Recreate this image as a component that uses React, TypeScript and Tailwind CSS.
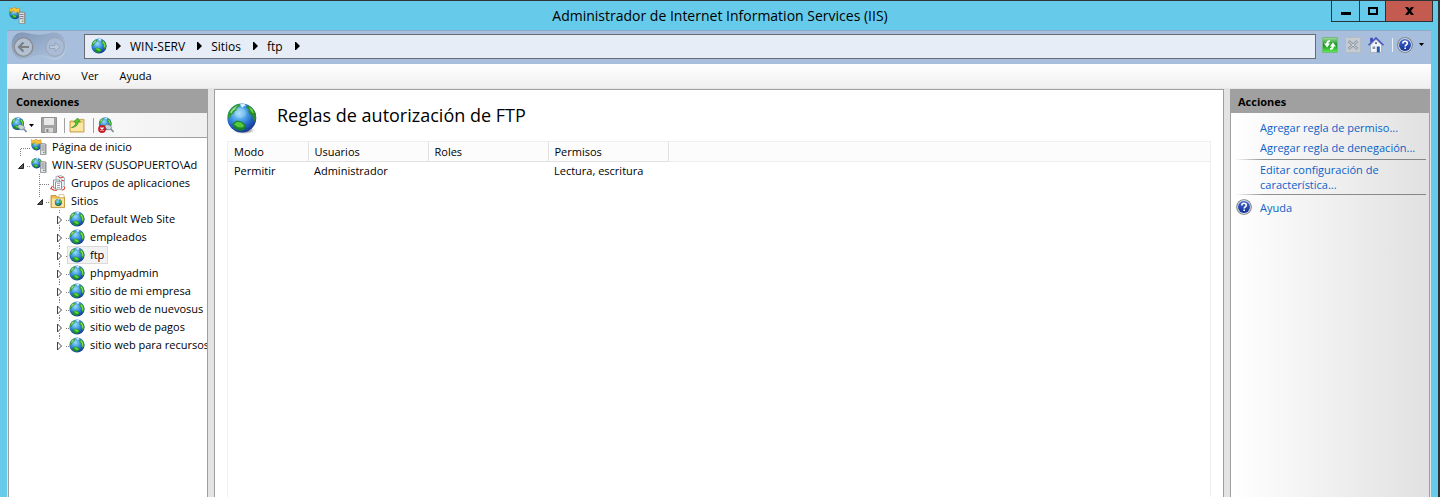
import React from "react";

const GlobeShape = () => (
  <g>
    <circle cx="8" cy="8" r="7.6" fill="url(#sea)" />
    <path d="M.7 6 1.800 3.700 4 1.900 5.600 1.600 6.200 3 4.800 4.700 3.600 5.200 2.800 7.400 1.500 8.600z" fill="#3c9f35" />
    <path d="M2.300 4.300 4.300 2.500l1 .7-1.700 1.600-.9 1.400z" fill="#9cdc86" />
    <path d="M7 1.200 9.500.8l1 1.200-1.600 1z" fill="#d6eefb" />
    <path d="M10.400 3.100 12.300 2.400l1.800 1.900 1.100 2.600-.1 2.700-1.400 1.700-1.200-1.700.2-2.300-2-1.700z" fill="#32a32a" />
    <path d="M11.500 3.900 12.600 3.600l1.500 2.800v2.800l-.8-.2-.1-2.500z" fill="#93ee4e" />
    <path d="M3.700 10.600 6.300 9.500l3.300 1.300 1.100 1.700-2 1.900-3 .1L3.500 13z" fill="#1d8f24" />
    <path d="M4.600 10.800 6.500 10l2.700 1.300.6 1.200-2.200.5z" fill="#5fd63c" />
  </g>
);

const LargeGlobe = () => (
  <svg className="h-8 w-[30px] shrink-0" viewBox="0 0 30 32" aria-hidden="true">
    <ellipse cx="17" cy="27.500" rx="11" ry="3.500" fill="url(#shade)" />
    <circle cx="14.800" cy="15" r="14.500" fill="url(#sea)" />
    <path d="M.8 11.500C2.200 6.500 6 2.500 11 1l2.500.6-1.200 2.200-3 1.500 1 1.800-2.600 1.300-1 2-2.400 1-.8 3-2 1.200z" fill="#2f9a3a" />
    <path d="M3 9.500C4.500 6 7.500 3.500 11 2.400L8.600 4.800l-.4 1.800-2.400 1.200L5 10z" fill="#9add9a" />
    <path d="M13 1.200 17 .9l2 1.300-2.600 1.300-1.200 1.300z" fill="#e2f4fc" />
    <path d="M20.500 2c4 1.500 7.300 5 8.500 9.500l-.2 5-1.700 2-1.400-3-.4-3.400-2.500-.6-1.500-2.500.6-2.600-2.700-2z" fill="#2b8a2c" />
    <path d="M22 3.800 25.500 6.500l1.200 3.500-1.500-.3L23.300 7z" fill="#71d24b" />
    <path d="M5 21.200 9.500 17.600l5.300 1 4.200 3.600-1.600 4.200-4.200 1.600-5.400-2.500z" fill="#1a8329" />
    <path d="M6.800 21.300 10 18.800l4.300.8 2.900 2.800-1.500 2.100-4.900-.2z" fill="#54c93d" />
    <ellipse cx="13.500" cy="10" rx="6" ry="5" fill="#fff" opacity=".18" />
  </svg>
);

const Svg = ({ className = "size-4", children, box = "0 0 16 16" }: { className?: string; children: React.ReactNode; box?: string }) => (
  <svg className={`${className} shrink-0`} viewBox={box} aria-hidden="true">
    {children}
  </svg>
);

const Globe = () => (
  <Svg>
    <GlobeShape />
  </Svg>
);

const Tower = () => (
  <g>
    <path d="M9.500 4.500h4.700l1.300 1V15.500h-6z" fill="#8a8d92" />
    <path d="M9.500 5h5v10.500h-5z" fill="#e3e5e7" stroke="#85888d" strokeWidth=".7" />
    <path d="M10.300 7h3.400M10.300 9h3.400M10.300 11h3.400" stroke="#74787d" strokeWidth=".9" />
    <path d="M12 13.300h1.500" stroke="#3fae3a" strokeWidth="1.200" />
  </g>
);

const ServerIcon = ({ home = false, className = "size-4" }: { home?: boolean; className?: string }) => (
  <Svg className={className}>
    <g transform="translate(0 .5) scale(.7)">
      <GlobeShape />
    </g>
    {home && <path d="M0 .5 2.500 2 5 0l1.500 1.600L10 .8v5L7.600 4.400 6 6 4.600 3.600 1 4.500z" fill="#f9c63a" stroke="#c98712" strokeWidth=".5" />}
    <Tower />
  </Svg>
);

const PoolsIcon = () => (
  <Svg>
    <path d="M6 1.500 11 .6l3.500 2.200-.2 8-3.300 2.400-5-.8z" fill="#eef3f6" stroke="#8ba7b5" strokeWidth=".8" />
    <path d="M8 1.200 10 3l3.600-1M11 5l3.200 1" stroke="#d23c2c" fill="none" />
    <path d="M3.500 5h6v8h-6z" fill="#fff" stroke="#6d7c88" strokeWidth=".8" />
    <path d="M5.500 6.800h6v7.400h-6z" fill="#fff" stroke="#6d7c88" strokeWidth=".8" />
    <path d="M7 8.700h3M7 10.500h3M7 12.300h3" stroke="#7e90a0" strokeWidth=".8" />
    <path d="M2.500 11 .8 13.600 4 15.200h3M14.800 11.500l-.6 2.700-2.500 1" stroke="#d33f2d" strokeWidth="1.100" fill="none" />
  </Svg>
);

const SitesIcon = () => (
  <Svg>
    <path d="M1 2.500h5l1 1.600h7.500v10.500H1z" fill="#e9bd55" stroke="#b98b2b" strokeWidth=".8" />
    <path d="M2 5.500h12v8.400H2z" fill="#fae39b" />
    <path d="M9 1.600h5v3H9z" fill="#fff" stroke="#c5a85a" strokeWidth=".6" />
    <g transform="translate(4.600 5.800) scale(.46)">
      <GlobeShape />
    </g>
  </Svg>
);

const Plug = () => (
  <g>
    <path d="m10 10 3 2.200 2.600 2.800" stroke="#7c9098" strokeWidth="1.700" fill="none" />
    <path d="m6.500 9.400 2-2 3.600.8 1.600 2.400-1.800 2.200-3-.2z" fill="#c3d3d8" stroke="#6e8790" strokeWidth=".8" />
  </g>
);

const ConnectIcon = () => (
  <Svg>
    <g transform="scale(.84)">
      <GlobeShape />
    </g>
    <Plug />
  </Svg>
);

const DisconnectIcon = () => (
  <Svg>
    <g transform="translate(.5 0) scale(.84)">
      <GlobeShape />
    </g>
    <Plug />
    <circle cx="4" cy="12" r="3.900" fill="#c5202a" />
    <path d="m2.500 10.500 3 3m0-3-3 3" stroke="#fff" strokeWidth="1.300" />
  </Svg>
);

const SaveIcon = () => (
  <Svg>
    <path d="M.5.5h15v15h-15z" fill="#a3a3a3" stroke="#919191" />
    <path d="M3 1h10v7H3z" fill="#e8e8e8" />
    <path d="M4 11h8v4.500H4z" fill="#d8d8d8" />
    <path d="M5.300 12h2.200v3H5.300z" fill="#8a8a8a" />
  </Svg>
);

const UpFolderIcon = () => (
  <Svg>
    <path d="M1 4h7l1.400-1.600H15V15H1z" fill="#f2d27a" stroke="#bd9644" strokeWidth=".8" />
    <path d="M2 6h12v8H2z" fill="#fae5a2" />
    <path d="M2.500 10.500C5.500 9.500 7 7.500 6.700 5H4.800L8.500 1 11.500 5H9.300C9 8 6.500 10.500 2.500 10.500z" fill="#54c52d" stroke="#2c8a20" strokeWidth=".6" />
  </Svg>
);

const HelpIcon = () => (
  <Svg>
    <circle cx="8" cy="8" r="7.800" fill="#73777f" />
    <circle cx="8" cy="8" r="6.900" fill="#d9dde6" />
    <circle cx="8" cy="8" r="6" fill="url(#help)" />
    <path d="M5.800 6.400C5.800 4.900 6.700 4.200 8 4.200s2.300.8 2.300 2c0 1.600-2.100 1.600-2.100 3.200M8.200 10.600v1.500" stroke="#fff" strokeWidth="1.600" fill="none" />
  </Svg>
);

const RefreshIcon = () => (
  <Svg>
    <path d="M.5.5h15v15h-15z" fill="url(#green)" stroke="#7cb783" />
    <path d="M8 3.200C5.600 3 4.200 4.400 4.200 6.600H1.900l3.200 4 3.100-4H6.400c0-1.200.4-1.600 1.600-1.800z" fill="#fff" />
    <path d="M8 12.800c2.400.2 3.800-1.200 3.800-3.400h2.300l-3.200-4-3.100 4h1.800c0 1.200-.4 1.600-1.600 1.800z" fill="#fff" />
  </Svg>
);

const StopIcon = () => (
  <Svg>
    <path d="M.5.5h15v15h-15z" fill="#c5cbd3" stroke="#b5bbc3" />
    <path d="m3.500 4 9 8m0-8-9 8" stroke="#9299a2" strokeWidth="2.800" />
    <path d="m3.500 4 9 8m0-8-9 8" stroke="#d4d8dc" strokeWidth="1" />
  </Svg>
);

const HomeIcon = () => (
  <Svg>
    <path d="M2.200.8h2.600v4H2.200z" fill="#3b43b5" />
    <path d="M2.500 8 8 2.500 13.600 8v7.400H2.500z" fill="#f3f4f7" stroke="#9ba1ad" strokeWidth=".7" />
    <path d="M.5 8.200 8 .9l7.500 7.300" stroke="#4452bd" strokeWidth="1.500" fill="none" />
    <path d="M8.800 9.500h3v5.900h-3z" fill="#235ca8" />
    <path d="M4.600 9.500h2.600V12H4.600z" fill="#8693ad" />
    <path d="M7 5.300h2v1.800H7z" fill="#5e6c8d" />
  </Svg>
);

const Crumb = () => (
  <Svg className="h-2 w-[5px]" box="0 0 5 8">
    <path d="M0 0h1l4 4-4 4H0z" fill="#000" />
  </Svg>
);

const Caret = () => (
  <Svg className="h-[3px] w-[5px]" box="0 0 5 3">
    <path d="M0 0h5L2.500 3z" fill="#000" />
  </Svg>
);

const NavPad = () => (
  <svg className="block h-7 w-14" viewBox="0 0 56 28" aria-hidden="true">
    <path d="M11 1c6 0 9 2.200 17 2.200S39 1 43 1c8 0 12 6 12 12.500S51 27 44 27c-6 0-9-3.500-16-3.500S18 27 12 27C5 27 1 20.500 1 13.500S4 1 11 1z" fill="url(#pad)" stroke="url(#padEdge)" />
    <circle cx="12.500" cy="15" r="9.300" fill="#b3c0d1" stroke="#8a8c90" strokeWidth="1.300" />
    <path d="M18 15H8m4.500-4.500L8 15l4.500 4.500" stroke="#7d7f83" strokeWidth="2.200" fill="none" />
    <circle cx="44" cy="15" r="9.300" fill="#a9bcd6" stroke="#9aa4b1" />
    <path d="M38.500 13.500H44v-3l5 4.500-5 4.500v-3h-5.500z" stroke="#99a5b4" fill="#b9c9dd" />
  </svg>
);

const Defs = () => (
  <svg className="absolute size-0" aria-hidden="true">
    <defs>
      <radialGradient id="sea" cx=".4" cy=".34" r=".68">
        <stop offset="0" stopColor="#9adcf8" />
        <stop offset=".4" stopColor="#479fe6" />
        <stop offset=".75" stopColor="#1f5cc0" />
        <stop offset="1" stopColor="#153a8c" />
      </radialGradient>
      <radialGradient id="shade">
        <stop offset="0" stopColor="#555" />
        <stop offset="1" stopColor="#555" stopOpacity="0" />
      </radialGradient>
      <linearGradient id="help" x2="0" y2="1">
        <stop offset="0" stopColor="#4468cc" />
        <stop offset="1" stopColor="#12309a" />
      </linearGradient>
      <linearGradient id="green" x2="0" y2="1">
        <stop offset="0" stopColor="#9fdc9c" />
        <stop offset=".5" stopColor="#12951c" />
        <stop offset="1" stopColor="#5cf052" />
      </linearGradient>
      <linearGradient id="pad" x2="1" y2="1">
        <stop offset="0" stopColor="#7f97b8" />
        <stop offset="1" stopColor="#b0c5e0" />
      </linearGradient>
      <linearGradient id="padEdge" x2="1" y2="1">
        <stop offset="0" stopColor="#7d8fa8" />
        <stop offset="1" stopColor="#c6d6ea" />
      </linearGradient>
    </defs>
  </svg>
);

type Kind = "first" | "server" | "child" | "folder" | "site" | "last";

const guideWidth: Record<Kind, string> = {
  first: "w-[22px]",
  server: "w-[22px]",
  child: "w-[41px]",
  folder: "w-[41px]",
  site: "w-[60px]",
  last: "w-[60px]",
};

const Guide = ({ kind }: { kind: Kind }) => (
  <svg className={`h-[18px] shrink-0 ${guideWidth[kind]}`} aria-hidden="true">
    <g stroke="#808080" strokeDasharray="1 1" fill="none">
      {kind === "first" && <path d="M11.500 18V10.500H22" />}
      {kind === "server" && <path d="M18 10.500h4" />}
      {kind === "child" && <path d="M30.500 0v18M31 10.500h10" />}
      {kind === "folder" && <path d="M30.500 0v5M37 10.500h4" />}
      {kind === "site" && <path d="M50.500 0v4M50.500 15v3M57 10.500h3" />}
      {kind === "last" && <path d="M50.500 0v4M57 10.500h3" />}
    </g>
    {kind === "server" && <path d="M14.500 7.500v5h-5z" fill="#595959" stroke="#262626" />}
    {kind === "folder" && <path d="M33.500 7.500v5h-5z" fill="#595959" stroke="#262626" />}
    {(kind === "site" || kind === "last") && <path d="M48.500 6v8l4-4z" fill="#fff" stroke="#444" />}
  </svg>
);

const nodes: { kind: Kind; label: string; icon: React.ReactNode; selected?: boolean }[] = [
  { kind: "first", label: "Página de inicio", icon: <ServerIcon home /> },
  { kind: "server", label: "WIN-SERV (SUSOPUERTO\\Ad", icon: <ServerIcon /> },
  { kind: "child", label: "Grupos de aplicaciones", icon: <PoolsIcon /> },
  { kind: "folder", label: "Sitios", icon: <SitesIcon /> },
  { kind: "site", label: "Default Web Site", icon: <Globe /> },
  { kind: "site", label: "empleados", icon: <Globe /> },
  { kind: "site", label: "ftp", icon: <Globe />, selected: true },
  { kind: "site", label: "phpmyadmin", icon: <Globe /> },
  { kind: "site", label: "sitio de mi empresa", icon: <Globe /> },
  { kind: "site", label: "sitio web de nuevosus", icon: <Globe /> },
  { kind: "site", label: "sitio web de pagos", icon: <Globe /> },
  { kind: "last", label: "sitio web para recursos", icon: <Globe /> },
];

const PanelTitle = ({ children }: { children: React.ReactNode }) => (
  <h2 className="flex h-6 shrink-0 items-center bg-[#a0a0a0] px-[7px] font-bold">{children}</h2>
);

const Rule = () => <hr className="ml-1 mr-[3px] h-px border-0 bg-linear-to-r from-transparent via-[#909090] via-15% to-[#858585]" />;

const columns = ["Modo", "Usuarios", "Roles", "Permisos"];
const rules = [["Permitir", "Administrador", "", "Lectura, escritura"]];

export default function App() {
  return (
    <div className="flex h-screen flex-col overflow-hidden border-t border-r-2 border-[#2f3338] bg-[#66cbea] pr-[7px] pl-[7px] font-['Open_Sans','Noto_Sans',sans-serif] text-[11px] leading-[15px] text-black">
      <Defs />
      <header className="flex h-[29px] shrink-0 items-start">
        <div className="flex flex-1 pt-[6px] pl-[2px]">
          <ServerIcon home className="size-[17px]" />
        </div>
        <h1 className="pt-[5px] text-[14px] leading-[20px]">Administrador de Internet Information Services (IIS)</h1>
        <div className="flex flex-1 justify-end">
          <div className="-mr-[2px] flex h-[21px] divide-x divide-[#263238] border-x border-b border-[#263238]">
            <button aria-label="Minimizar" className="flex w-[28px] items-center justify-center pt-1">
              <span className="h-[3px] w-[10px] bg-black" />
            </button>
            <button aria-label="Maximizar" className="flex w-[26px] items-center justify-center">
              <span className="h-2 w-[10px] border-2 border-black" />
            </button>
            <button aria-label="Cerrar" className="flex w-[46px] items-center justify-center bg-[#c35b50]">
              <Svg className="h-2 w-[9px]" box="0 0 9 8">
                <path d="M0 0h3l1.500 2L6 0h3L6 4l3 4H6L4.500 6 3 8H0l3-4z" fill="#000" />
              </Svg>
            </button>
          </div>
        </div>
      </header>

      <div className="flex min-h-0 flex-1 flex-col bg-[#e3e3e3]">
        <nav className="flex h-[34px] shrink-0 items-center border-t border-[#8aaac4] bg-[#a7bfdd] pr-[7px] pb-[3px] pl-[4px]">
          <button aria-label="Atrás y adelante">
            <NavPad />
          </button>
          <div className="ml-[17px] flex h-[25px] flex-1 items-center border border-[#686c72] bg-[#e6edf6] px-[6px]">
            <Globe />
            <ol className="ml-[9px] flex items-center gap-[9px] text-[12px]">
              <li><Crumb /></li>
              <li className="flex items-center gap-3"><a href="#server">WIN-SERV</a><Crumb /></li>
              <li className="flex items-center gap-3"><a href="#sitios">Sitios</a><Crumb /></li>
              <li className="flex items-center gap-3"><a href="#ftp">ftp</a><Crumb /></li>
            </ol>
          </div>
          <div className="ml-[6px] flex items-center gap-[7px] pb-[3px]">
            <button aria-label="Actualizar"><RefreshIcon /></button>
            <button aria-label="Detener" disabled><StopIcon /></button>
            <button aria-label="Inicio"><HomeIcon /></button>
            <span className="ml-px h-[14px] w-px bg-[#e9eff7]" />
            <button aria-label="Ayuda" className="-ml-[3px] flex items-center gap-[6px]"><HelpIcon /><Caret /></button>
          </div>
        </nav>

        <div className="flex h-6 shrink-0 items-center gap-[21px] bg-linear-to-b from-white to-[#efefef] px-[15px] pb-[2px]">
          <button>Archivo</button>
          <button>Ver</button>
          <button>Ayuda</button>
        </div>

        <div className="flex min-h-0 flex-1 gap-[6px] border-t border-[#e6e6e6] px-px">
          <aside className="flex w-[200px] shrink-0 flex-col border-x border-[#a0a0a0] bg-white">
            <PanelTitle>Conexiones</PanelTitle>
            <div className="flex h-[25px] shrink-0 items-center border-b border-[#a0a0a0] bg-linear-to-r from-white to-[#f0f0f0] pl-[2px]">
              <button aria-label="Conectar" className="flex items-center gap-[2px]"><ConnectIcon /><Caret /></button>
              <button aria-label="Guardar" className="ml-[7px]" disabled><SaveIcon /></button>
              <span className="ml-[7px] h-[15px] w-px bg-[#a0a0a0]" />
              <button aria-label="Subir" className="ml-[4px]"><UpFolderIcon /></button>
              <span className="ml-[8px] h-[15px] w-px bg-[#a0a0a0]" />
              <button aria-label="Desconectar" className="ml-[4px]"><DisconnectIcon /></button>
            </div>
            <ul className="overflow-hidden">
              {nodes.map((n) => (
                <li key={n.label} className="flex h-[18px] items-center whitespace-nowrap">
                  <Guide kind={n.kind} />
                  <div className={n.selected ? "-ml-[2px] flex h-[18px] items-center gap-[5px] border border-[#dadada] bg-[#f2f2f2] pr-[3px] pl-px" : "flex h-[18px] items-center gap-[5px]"}>
                    {n.icon}
                    <span className="pb-[2px]">{n.label}</span>
                  </div>
                </li>
              ))}
            </ul>
          </aside>

          <main className="flex min-w-0 flex-1 flex-col border-x border-t border-[#a0a0a0] bg-white pr-3 pl-3">
            <div className="flex h-[51px] shrink-0 items-center gap-5">
              <span className="pt-[6px]"><LargeGlobe /></span>
              <h2 className="pb-[2px] text-[18px] leading-[24px]">Reglas de autorización de FTP</h2>
            </div>
            <div className="min-h-0 flex-1 border-x border-t border-[#efefef]">
              <table className="w-full table-fixed border-collapse text-left">
                <colgroup>
                  <col className="w-[80px]" />
                  <col className="w-[120px]" />
                  <col className="w-[120px]" />
                  <col className="w-[120px]" />
                  <col />
                </colgroup>
                <thead>
                  <tr className="h-[19px] bg-[#fcfcfc]">
                    {columns.map((c) => (
                      <th key={c} className="border-r border-b border-[#e2e2e2] p-0 pl-[6px] font-normal">{c}</th>
                    ))}
                    <td className="border-b border-[#ececec] p-0" />
                  </tr>
                </thead>
                <tbody>
                  {rules.map((r) => (
                    <tr key={r[0]} className="h-[19px]">
                      {r.map((cell, i) => (
                        <td key={i} className="p-0 pl-[6px]">{cell}</td>
                      ))}
                      <td />
                    </tr>
                  ))}
                </tbody>
              </table>
            </div>
          </main>

          <aside className="flex w-[200px] shrink-0 flex-col border-x border-[#a0a0a0] bg-linear-to-r from-white to-[#e1e1e1]">
            <PanelTitle>Acciones</PanelTitle>
            <div className="flex flex-col text-[#0a62c8]">
              <a href="#permiso" className="mt-[7px] ml-[29px] whitespace-nowrap">Agregar regla de permiso...</a>
              <a href="#denegacion" className="mt-[5px] mb-[4px] ml-[29px] whitespace-nowrap">Agregar regla de denegación...</a>
              <Rule />
              <a href="#editar" className="mt-[2px] mb-[2px] ml-[29px] w-[150px]">Editar configuración de característica...</a>
              <Rule />
              <a href="#ayuda" className="mt-[4px] ml-[5px] flex items-center gap-2"><HelpIcon />Ayuda</a>
            </div>
          </aside>
        </div>
      </div>
    </div>
  );
}
